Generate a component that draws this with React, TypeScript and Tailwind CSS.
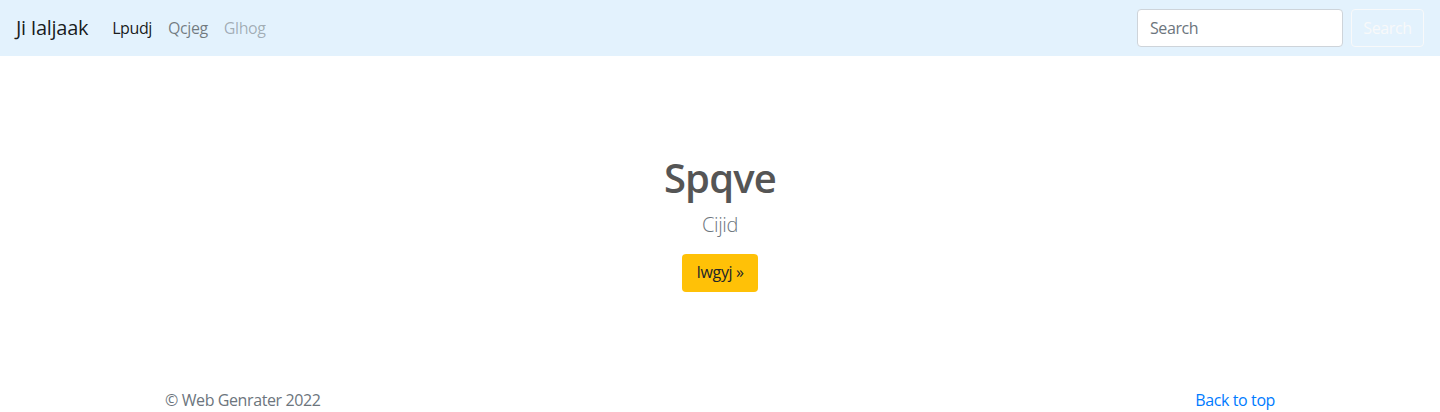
export default function App() {
  return (
    <div className="min-h-screen bg-white text-[#212529] font-['Open_Sans',sans-serif] text-base leading-normal tracking-[-0.4px]">
      {/* Navbar */}
      <nav className="flex h-14 items-center justify-between bg-[#e3f2fd] px-4">
        <div className="flex items-center">
          <a className="mr-4 text-xl leading-[30px] tracking-[-0.3px] text-black/90">Ji Ialjaak</a>
          <ul className="flex">
            <li><a className="block px-2 py-2 text-black/90">Lpudj</a></li>
            <li><a className="block px-2 py-2 text-black/50">Qcjeg</a></li>
            <li><a className="block px-2 py-2 text-black/30">Glhog</a></li>
          </ul>
        </div>
        <form className="flex items-center">
          <input
            type="search"
            placeholder="Search"
            className="h-[38px] w-[206px] rounded border border-[#ced4da] bg-white px-3 text-base text-[#495057] placeholder-[#6c757d] outline-none"
          />
          <button
            type="button"
            className="ml-[8px] h-[38px] w-[73px] rounded border border-[#f8f9fa] text-base text-[#f8f9fa]"
          >
            Search
          </button>
        </form>
      </nav>

      {/* Hero */}
      <main className="pt-[98px] pb-12 text-center">
        <h1 className="mb-2 text-[40px] font-semibold leading-[48px] tracking-[-0.8px] text-[#555]">Spqve</h1>
        <p className="mb-[14px] text-xl font-light leading-[30px] text-[#6c757d]">Cijid</p>
        <a className="inline-block h-[38px] rounded bg-[#ffc107] px-[15px] py-[6px] leading-6 text-[#212529]">
          Iwgyj &raquo;
        </a>
      </main>

      {/* Footer */}
      <footer className="mx-auto flex max-w-[1140px] justify-between px-[15px] pt-12 text-[#6c757d]">
        <p>&copy; Web Genrater 2022</p>
        <a className="text-[#007bff]">Back to top</a>
      </footer>
    </div>
  );
}
